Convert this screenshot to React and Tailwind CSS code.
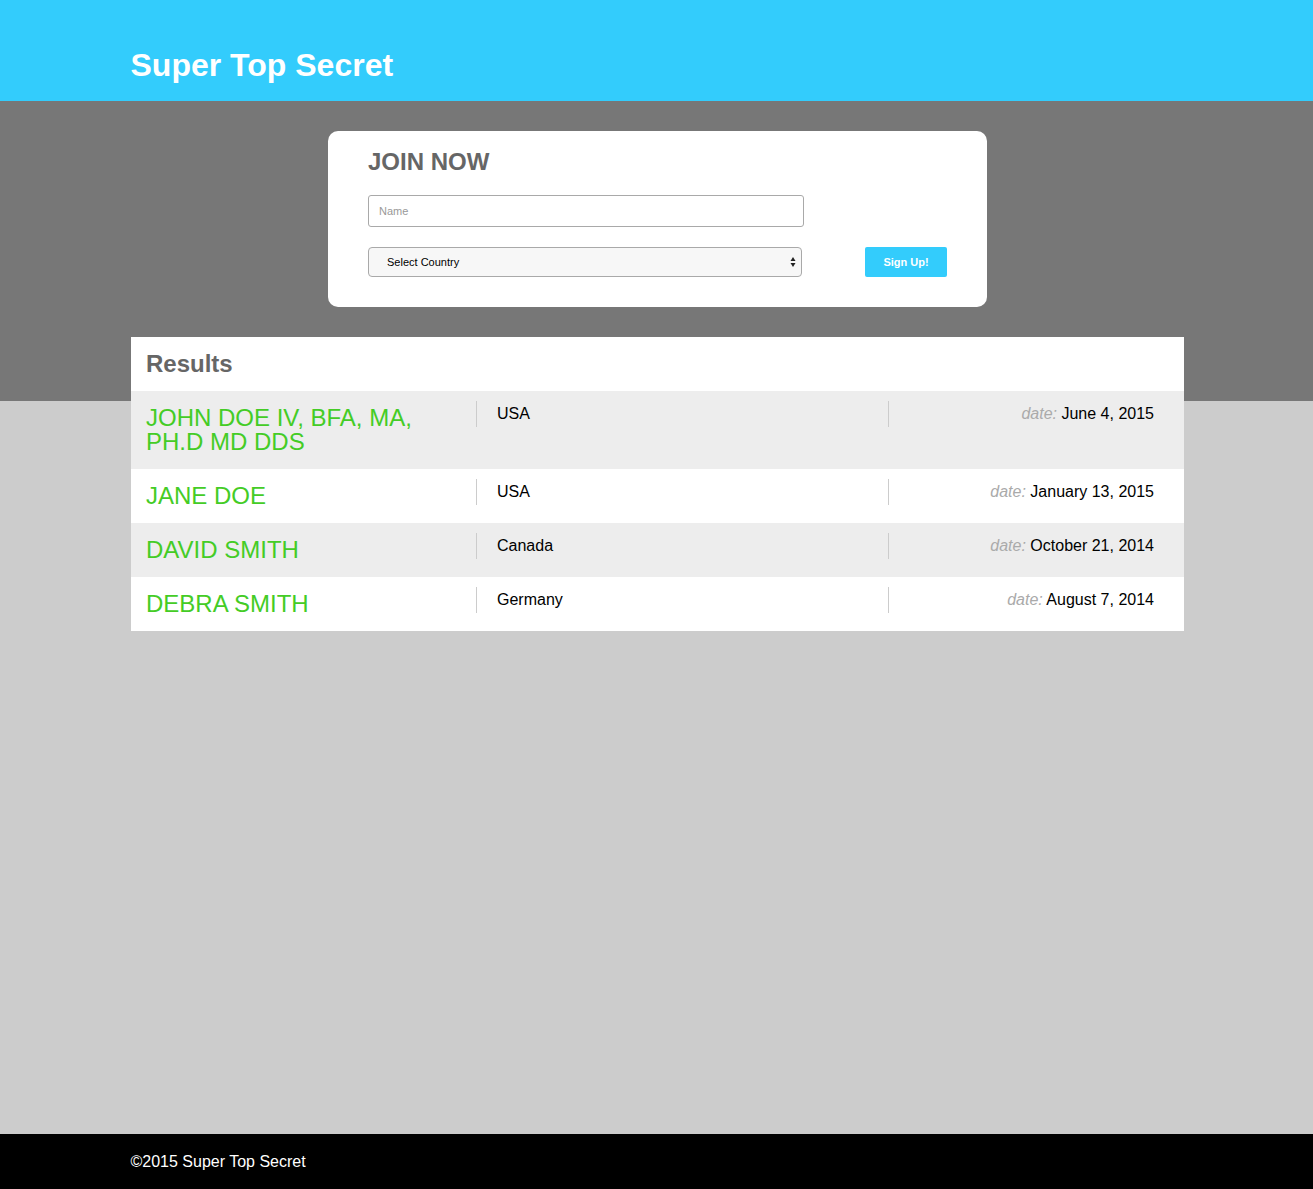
import React from "react";

const rows = [
  { name: "JOHN DOE IV, BFA, MA, PH.D MD DDS", country: "USA", date: "June 4, 2015", bg: "bg-[#ededed]" },
  { name: "JANE DOE", country: "USA", date: "January 13, 2015", bg: "bg-white" },
  { name: "DAVID SMITH", country: "Canada", date: "October 21, 2014", bg: "bg-[#ededed]" },
  { name: "DEBRA SMITH", country: "Germany", date: "August 7, 2014", bg: "bg-white" },
];

export default function App() {
  return (
    <div className="min-h-screen flex flex-col font-['Liberation_Sans',Arial,sans-serif]">
      <header className="bg-[#33ccfc] h-[101px]">
        <div className="w-[1052px] mx-auto pt-[47px]">
          <h1 className="text-[32px] leading-[37px] font-bold text-white">Super Top Secret</h1>
        </div>
      </header>

      <main className="flex-1 bg-[linear-gradient(#777777_300px,#cccccc_300px)] pt-[30px]">
        <div className="w-[659px] mx-auto translate-x-[1px] bg-white rounded-[10px] pl-[40px] pt-[17px] pb-[30px]">
          <h2 className="text-[24px] leading-[28px] font-bold text-[#666666]">JOIN NOW</h2>
          <input
            type="text"
            placeholder="Name"
            className="mt-[19px] block w-[436px] h-[32px] border border-[#a9a9a9] rounded-[3px] pl-[10px] text-[11px] text-black placeholder:text-[#999999] outline-none"
          />
          <div className="mt-[20px] flex items-center">
            <div className="relative w-[434px] h-[30px]">
              <select className="appearance-none w-full h-full bg-[#f7f7f7] border border-[#a9a9a9] rounded-[4px] pl-[18px] text-[11px] text-black outline-none">
                <option>Select Country</option>
              </select>
              <svg className="absolute right-[6px] top-[9px] pointer-events-none" width="6" height="12" viewBox="0 0 6 12">
                <path d="M3 1 L5.5 5 L0.5 5 Z" fill="#222" />
                <path d="M3 11 L5.5 7 L0.5 7 Z" fill="#222" />
              </svg>
            </div>
            <button className="ml-[63px] w-[82px] h-[30px] bg-[#33ccfc] rounded-[2px] text-white text-[11px] font-bold">
              Sign Up!
            </button>
          </div>
        </div>

        <section className="w-[1053px] mx-auto translate-x-[1px] mt-[30px] bg-white">
          <h2 className="px-[15px] py-[13px] text-[24px] leading-[28px] font-bold text-[#666666]">Results</h2>
          {rows.map((r) => (
            <div key={r.name} className={`${r.bg} flex items-start pl-[15px] pr-[30px] py-[10px]`}>
              <div className="w-[330px] shrink-0 my-[5px] pr-[50px] text-[24px] leading-[24px] text-[#44cc26]">{r.name}</div>
              <div className="w-[412px] shrink-0 border-l border-[#cccccc] pl-[20px] text-[16px] leading-[26px] text-black">{r.country}</div>
              <div className="flex-1 border-l border-[#cccccc] text-right text-[16px] leading-[26px] text-black">
                <span className="italic text-[#aaaaaa]">date:</span> {r.date}
              </div>
            </div>
          ))}
        </section>
      </main>

      <footer className="bg-black h-[55px] flex items-center">
        <div className="w-[1052px] mx-auto text-white text-[16px]">©2015 Super Top Secret</div>
      </footer>
    </div>
  );
}
